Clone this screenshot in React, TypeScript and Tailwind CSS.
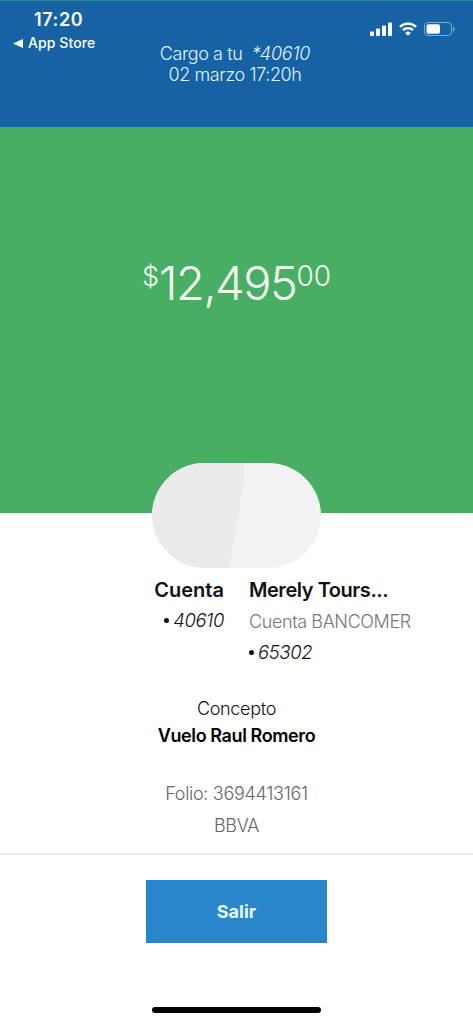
function SignalIcon() {
  return (
    <svg className="w-[22px] h-[14px]" viewBox="0 0 22 14" fill="currentColor">
      <rect x="0" y="9.500" width="4" height="4.500" rx="1" />
      <rect x="6" y="6.500" width="4" height="7.500" rx="1" />
      <rect x="12" y="3.500" width="4" height="10.500" rx="1" />
      <rect x="18" y="0.500" width="4" height="13.500" rx="1" />
    </svg>
  )
}

function WifiIcon() {
  return (
    <svg className="w-[18px] h-[14px]" viewBox="0 0 18 14" fill="none" stroke="currentColor" strokeWidth="2.4">
      <path d="M0.9 4.9a11.6 11.6 0 0 1 16.2 0" />
      <path d="M3.9 8.2a7.3 7.3 0 0 1 10.2 0" />
      <path d="M9 13.8 6.1 10.9a4.2 4.2 0 0 1 5.8 0z" fill="currentColor" stroke="none" />
    </svg>
  )
}

function BatteryIcon() {
  return (
    <svg className="w-[31px] h-[14px]" viewBox="0 0 31 14" fill="none">
      <rect x="0.5" y="0.5" width="27" height="13" rx="3.5" stroke="#fff" strokeOpacity="0.45" />
      <rect x="2.5" y="2.2" width="13.5" height="9.6" rx="1.8" fill="#fff" />
      <path d="M29 4.8v4.6c1-.4 1.6-1.3 1.6-2.3S30 5.200 29 4.800z" fill="#fff" fillOpacity="0.5" />
    </svg>
  )
}

function Account({ digits }: { digits: string }) {
  return (
    <p className="flex items-center gap-[4px] text-[18.500px] leading-[22px] font-light text-[#111]">
      <span className="size-[5px] rounded-full bg-[#111]" />
      <span className="italic tracking-[-0.4px]">{digits}</span>
    </p>
  )
}

export default function App() {
  return (
    <div className="w-full h-[1024px] flex flex-col bg-white overflow-hidden whitespace-nowrap font-['Inter',sans-serif]">
      <header className="h-[127px] shrink-0 grid grid-cols-[118px_1fr_121px] bg-[#1662a4] border-t border-[#2f8592] text-white">
        <div className="pt-[8px] pl-[13px]">
          <p className="pl-[21px] text-[18px] leading-[22px] font-semibold tracking-[0.6px]">17:20</p>
          <p className="mt-[2px] flex items-center gap-[5px] text-[14px] leading-5 font-medium">
            <svg className="w-[10px] h-[9px]" viewBox="0 0 10 9" fill="currentColor">
              <path d="M0 4.500 10 0v9z" />
            </svg>
            <span className="tracking-[0.1px]">App Store</span>
          </p>
        </div>
        <div className="pt-[42px] text-center text-[18px] leading-[21px] font-light text-[#e2f4ff]">
          <p className="tracking-[-0.4px]">
            Cargo a tu&nbsp; <span className="italic tracking-[-0.2px]">*40610</span>
          </p>
          <p className="tracking-[-0.4px]">02 marzo 17:20h</p>
        </div>
        <div className="flex gap-[7px] pt-[21px] pl-[18px]">
          <SignalIcon />
          <WifiIcon />
          <BatteryIcon />
        </div>
      </header>

      <section className="h-[386px] shrink-0 bg-[#48ae64] text-[#f4fff0]">
        <div className="pt-[131px] flex justify-center items-start font-light">
          <span className="text-[27px] leading-[37px]">$</span>
          <span className="text-[47px] leading-[50px] tracking-[-1.500px]">12,495</span>
          <span className="text-[28px] leading-[37px]">00</span>
        </div>
      </section>

      <main className="flex flex-col items-center">
        <div className="relative -mt-[50px] w-[169px] h-[105px] rounded-full overflow-hidden">
          <svg className="size-full" viewBox="0 0 169 105">
            <rect width="169" height="105" fill="#f2f2f2" />
            <path d="M0 0h93Q91 30 85 60 80 82 77.500 105H0z" fill="#ebebeb" />
          </svg>
        </div>

        <div className="w-full mt-[10px] grid grid-cols-[224px_1fr] gap-x-[25px]">
          <div className="flex flex-col items-end">
            <h2 className="text-[20px] leading-6 font-semibold text-[#111]">Cuenta</h2>
            <div className="mt-[7px]">
              <Account digits="40610" />
            </div>
          </div>
          <div>
            <h2 className="text-[20px] leading-6 font-semibold text-[#111] tracking-[-0.450px]">Merely Tours...</h2>
            <p className="mt-[9px] text-[18px] leading-[22px] font-light text-[#777] tracking-[-0.4px]">Cuenta BANCOMER</p>
            <div className="mt-[8px]">
              <Account digits="65302" />
            </div>
          </div>
        </div>

        <div className="mt-[33px] text-center text-[18px]">
          <p className="leading-[26px] font-light text-[#111] tracking-[-0.3px]">Concepto</p>
          <p className="leading-[27px] font-semibold text-black tracking-[-0.4px]">Vuelo Raul Romero</p>
        </div>
        <div className="mt-[29px] text-center text-[18px] leading-8 font-light text-[#666] tracking-[-0.3px]">
          <p>Folio: 3694413161</p>
          <p>BBVA</p>
        </div>
      </main>

      <footer className="mt-[11px] flex flex-col items-center border-t-2 border-[#ebebeb]">
        <button className="mt-[25px] w-[181px] h-[63px] bg-[#2a86ca] text-[#e8fbff] text-[18px] font-bold">Salir</button>
        <div className="mt-[64px] w-[169px] h-[6px] rounded-full bg-black" />
      </footer>
    </div>
  )
}
